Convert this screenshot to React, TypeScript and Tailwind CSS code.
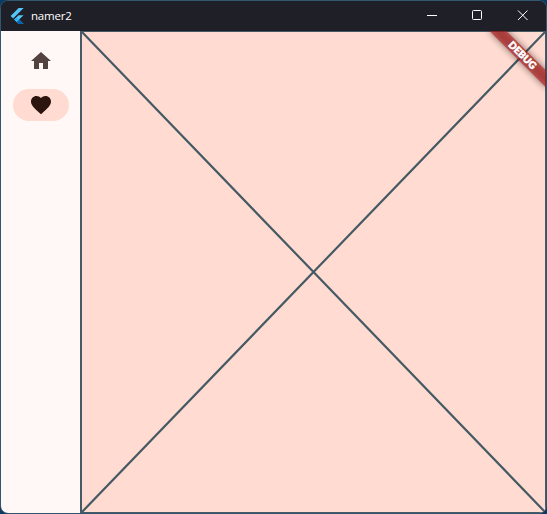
import React from "react";

function FlutterLogo() {
  return (
    <svg className="h-4 w-[14px]" viewBox="0 0 14 16">
      <path d="M8.6 0H13.6L3.1 10.5L0.6 8Z" fill="#54c5f8" />
      <path d="M8.6 7.2H13.6L9.1 11.6L13.6 16H8.6L4.2 11.6Z" fill="#54c5f8" />
      <path d="M6.7 14L9.1 11.6L13.6 16H8.6Z" fill="#0a62ad" />
      <path d="M4.2 11.6L6.7 9.2L9.1 11.6L6.7 14Z" fill="#29b6f6" />
    </svg>
  );
}

function TitleBar() {
  return (
    <header className="flex h-[30px] shrink-0 items-center bg-[#1f1f28] pl-[9px] text-white">
      <FlutterLogo />
      <span className="ml-[7px] grow font-['Open_Sans','Noto_Sans',sans-serif] text-[11.5px] leading-4 tracking-[-0.2px]">
        namer2
      </span>
      <svg className="h-[30px] w-[137px]" viewBox="409 1 137 30" fill="none" stroke="#fff">
        <path d="M427 15.5H437" />
        <rect x="472.5" y="10.5" width="9" height="9" rx="1" />
        <path d="M518 10.5L527.5 20M527.5 10.5L518 20" />
      </svg>
    </header>
  );
}

function NavigationRail() {
  return (
    <nav className="flex w-[79px] shrink-0 flex-col items-center gap-3 bg-[#fff8f6] pt-[14px]">
      <button className="flex h-8 w-14 items-center justify-center">
        <svg className="size-6" viewBox="0 0 24 24" fill="#53433f">
          <path d="M10 20v-6h4v6h5v-8h3L12 3 2 12h3v8z" />
        </svg>
      </button>
      <button className="flex h-8 w-14 items-center justify-center rounded-full bg-[#ffdbd1]">
        <svg className="size-6" viewBox="0 0 24 24" fill="#2c150f">
          <path d="M12 21.35l-1.45-1.32C5.4 15.36 2 12.28 2 8.5 2 5.42 4.42 3 7.5 3c1.74 0 3.41.81 4.5 2.09C13.09 3.81 14.76 3 16.5 3 19.58 3 22 5.42 22 8.5c0 3.78-3.4 6.86-8.55 11.54L12 21.35z" />
        </svg>
      </button>
    </nav>
  );
}

function Placeholder() {
  return (
    <main className="min-w-0 grow bg-[#ffdbd1]">
      <svg className="block h-[482px] w-[466px]" viewBox="80 31 466 482">
        <g fill="none" stroke="#455a64" strokeWidth="2">
          <rect x="81" y="31" width="465" height="482" />
          <path d="M81 31L546 513M546 31L81 513" strokeWidth="2.2" />
        </g>
        <g transform="translate(546 31) rotate(45)">
          <rect
            x="-40"
            y="28"
            width="80"
            height="12"
            fill="#000"
            fillOpacity="0.5"
            className="blur-[3.5px]"
          />
          <rect x="-40" y="28" width="80" height="12" fill="#b71c1c" fillOpacity="0.63" />
          <text
            x="0.4"
            y="37.2"
            textAnchor="middle"
            textLength="34.5"
            fill="#fff"
            stroke="#fff"
            strokeWidth="0.55"
            className="font-[Lato,sans-serif] text-[9.8px] font-black"
          >
            DEBUG
          </text>
        </g>
      </svg>
    </main>
  );
}

export default function App() {
  return (
    <div className="h-[514px] w-[547px] overflow-hidden bg-[#0b3a63]">
      <div className="flex h-full flex-col overflow-hidden rounded-lg border border-[#31566f] bg-[#1f1f28]">
        <TitleBar />
        <div className="flex min-h-0 grow">
          <NavigationRail />
          <Placeholder />
        </div>
      </div>
    </div>
  );
}
